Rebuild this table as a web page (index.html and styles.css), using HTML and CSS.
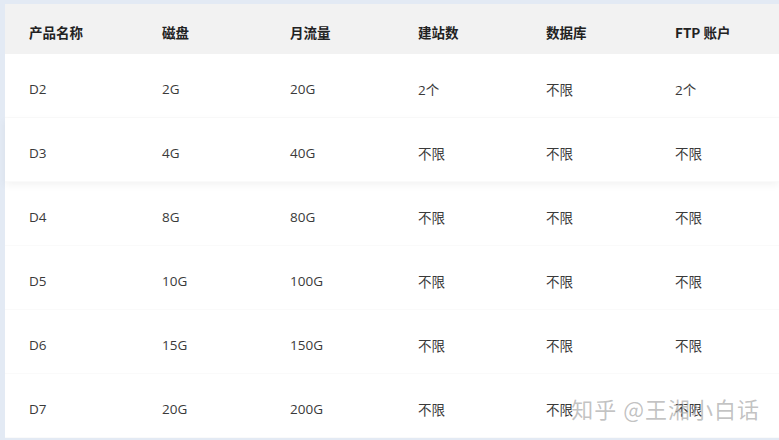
FILE: index.html
```html
<!DOCTYPE html>
<html lang="zh">
<head>
<meta charset="utf-8">
<link rel="stylesheet" href="styles.css">
</head>
<body>
<div class="page">
  <div class="table">
    <div class="row head">
      <div class="cell">产品名称</div><div class="cell">磁盘</div><div class="cell">月流量</div><div class="cell">建站数</div><div class="cell">数据库</div><div class="cell">FTP 账户</div>
    </div>
    <div class="row">
      <div class="cell">D2</div><div class="cell">2G</div><div class="cell">20G</div><div class="cell">2个</div><div class="cell">不限</div><div class="cell">2个</div>
    </div>
    <div class="row raised">
      <div class="cell">D3</div><div class="cell">4G</div><div class="cell">40G</div><div class="cell">不限</div><div class="cell">不限</div><div class="cell">不限</div>
    </div>
    <div class="row">
      <div class="cell">D4</div><div class="cell">8G</div><div class="cell">80G</div><div class="cell">不限</div><div class="cell">不限</div><div class="cell">不限</div>
    </div>
    <div class="row">
      <div class="cell">D5</div><div class="cell">10G</div><div class="cell">100G</div><div class="cell">不限</div><div class="cell">不限</div><div class="cell">不限</div>
    </div>
    <div class="row">
      <div class="cell">D6</div><div class="cell">15G</div><div class="cell">150G</div><div class="cell">不限</div><div class="cell">不限</div><div class="cell">不限</div>
    </div>
    <div class="row">
      <div class="cell">D7</div><div class="cell">20G</div><div class="cell">200G</div><div class="cell">不限</div><div class="cell">不限</div><div class="cell">不限</div>
    </div>
  </div>
  <div class="watermark">知乎 @王湘小白话</div>
</div>
</body>
</html>
```
FILE: styles.css
```css
* { box-sizing: border-box; }
html, body { margin: 0; padding: 0; }
body {
  width: 779px;
  height: 440px;
  overflow: hidden;
  background: #e3eaf4;
  font-family: "Open Sans", "Noto Sans CJK SC", sans-serif;
  color: #3a3a3a;
}
.page {
  position: relative;
  padding: 4px 0 2px 5px;
  height: 440px;
}
.table {
  background: #fff;
  height: 434px;
}
.row {
  display: grid;
  grid-template-columns: 157px 128px 128px 128px 129px 1fr;
  align-items: center;
  height: 64px;
  padding-top: 6px;
  font-size: 13.5px;
  background: #fff;
  border-bottom: 1px solid #fafafa;
  position: relative;
}
.row .cell:first-child { padding-left: 24px; }
.row.head {
  height: 50px;
  background: #f2f2f2;
  font-weight: 700;
  color: #222;
  border-bottom: none;
  font-family: "Noto Sans CJK SC", sans-serif;
}
.row.raised {
  box-shadow: 0 3px 8px rgba(0,0,0,0.05);
  z-index: 1;
}
.watermark {
  position: absolute;
  right: 19px;
  bottom: 16px;
  font-family: "Noto Sans CJK SC", sans-serif;
  font-size: 22px;
  letter-spacing: 1px;
  color: rgba(120,120,120,0.45);
  text-shadow: 1px 1px 0 rgba(255,255,255,0.6);
  z-index: 2;
}
```
